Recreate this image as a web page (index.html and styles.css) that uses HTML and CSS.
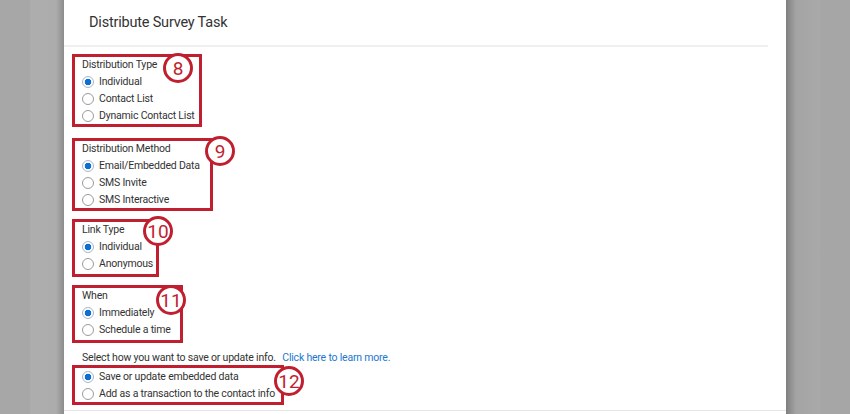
FILE: index.html
```html
<!DOCTYPE html>
<html lang="en">
<head>
    <meta charset="UTF-8">
    <title>Distribute Survey Task</title>
    <link rel="stylesheet" href="styles.css">
</head>
<body>
    <div class="modal">
        <div class="modal-header">
            <h1>Distribute Survey Task</h1>
        </div>

        <div class="modal-body">
            <div class="group group-type">
                <div class="group-title">Distribution Type</div>
                <label class="option"><input type="radio" name="type" checked> Individual</label>
                <label class="option"><input type="radio" name="type"> Contact List</label>
                <label class="option"><input type="radio" name="type"> Dynamic Contact List</label>
                <span class="badge badge-8">8</span>
            </div>

            <div class="group group-method">
                <div class="group-title">Distribution Method</div>
                <label class="option"><input type="radio" name="method" checked> Email/Embedded Data</label>
                <label class="option"><input type="radio" name="method"> SMS Invite</label>
                <label class="option"><input type="radio" name="method"> SMS Interactive</label>
                <span class="badge badge-9">9</span>
            </div>

            <div class="group group-link">
                <div class="group-title">Link Type</div>
                <label class="option"><input type="radio" name="link" checked> Individual</label>
                <label class="option"><input type="radio" name="link"> Anonymous</label>
                <span class="badge badge-10">10</span>
            </div>

            <div class="group group-when">
                <div class="group-title">When</div>
                <label class="option"><input type="radio" name="when" checked> Immediately</label>
                <label class="option"><input type="radio" name="when"> Schedule a time</label>
                <span class="badge badge-11">11</span>
            </div>

            <p class="save-note">Select how you want to save or update info. <a href="#">Click here to learn more.</a></p>

            <div class="group group-save">
                <label class="option"><input type="radio" name="save" checked> Save or update embedded data</label>
                <label class="option"><input type="radio" name="save"> Add as a transaction to the contact info</label>
                <span class="badge badge-12">12</span>
            </div>
        </div>

        <div class="modal-footer"></div>
    </div>
</body>
</html>
```

FILE: styles.css
```css
body {
    margin: 0;
    height: 414px;
    overflow: hidden;
    font-family: Roboto, "Liberation Sans", sans-serif;
    color: #3a3a3a;
    display: flex;
    justify-content: center;
    background: linear-gradient(to right,
        #a7a7a7 0px, #a7a7a7 30px,
        #adadad 30px, #acacac 56px, #8c8c8c 64px,
        #7f7f7f 786px, #a4a4a4 796px, #a9a9a9 820px,
        #a6a6a6 820px, #a6a6a6 850px);
}

.modal {
    width: 722px;
    height: 414px;
    background: #fff;
    display: flex;
    flex-direction: column;
}

.modal-header {
    height: 45px;
    padding-left: 25px;
    display: flex;
    align-items: center;
    border-bottom: 2px solid #efefef;
    margin-right: 18px;
}
.modal-header h1 {
    margin: 0;
    font-size: 14.5px;
    letter-spacing: -0.2px;
    font-weight: 400;
    color: #333;
}

.modal-body {
    flex: 1;
    padding: 7px 0 0 8px;
    position: relative;
}

.group {
    position: relative;
    box-sizing: border-box;
    border: 3px solid #c01f2f;
    padding: 0 0 0 7px;
    margin-bottom: 8px;
}
.group-type { width: 130px; margin-bottom: 11px; }
.group-method { width: 141px; }
.group-link { width: 87px; padding-bottom: 2px; }
.group-when { width: 111px; padding-bottom: 2px; margin-bottom: 8px; }
.group-save { width: 212px; margin-bottom: 0; }

.group-title,
.option,
.save-note {
    font-size: 10.5px;
    letter-spacing: -0.2px;
    white-space: nowrap;
    color: #333;
}

.group-title {
    line-height: 16px;
}

.option {
    display: flex;
    align-items: center;
    gap: 5px;
    height: 17px;
}
.option input {
    appearance: none;
    -webkit-appearance: none;
    margin: 0;
    width: 12px;
    height: 12px;
    border: 1px solid #9b9b9b;
    border-radius: 50%;
    background: #fff;
    box-sizing: border-box;
}
.option input:checked {
    border-color: #a9b6c6;
    background: radial-gradient(circle, #0d6fd6 0, #0d6fd6 3px, #fff 3.6px);
}

.badge {
    position: absolute;
    width: 30px;
    height: 30px;
    box-sizing: border-box;
    border: 3px solid #c01f2f;
    border-radius: 50%;
    background: #fff;
    color: #c01f2f;
    font-size: 19px;
    display: flex;
    align-items: center;
    justify-content: center;
}
.badge-8 { left: 88px; top: -4px; }
.badge-9 { left: 130px; top: -5px; }
.badge-10 { left: 68px; top: -6px; }
.badge-11 { left: 81px; top: -3px; }
.badge-12 { left: 199px; top: -2px; }

.save-note {
    margin: 0;
    padding-left: 10px;
    line-height: 14px;
}
.save-note a {
    color: #1b78d0;
    text-decoration: none;
    margin-left: 4px;
}

.modal-footer {
    height: 3px;
    border-top: 1px solid #e6e6e6;
}
```
